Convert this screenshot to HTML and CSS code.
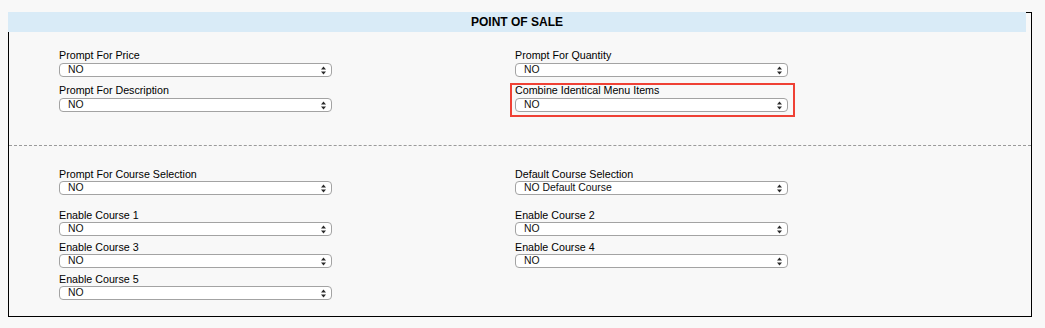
FILE: index.html
```html
<!DOCTYPE html>
<html>
<head>
<meta charset="utf-8">
<link rel="stylesheet" href="styles.css">
</head>
<body>
<div class="panel">
  <div class="panel-title">POINT OF SALE</div>

  <div class="section section-top">
    <div class="grid">
      <div class="field">
        <div class="label">Prompt For Price</div>
        <div class="select"><span class="value">NO</span><svg class="arrows" width="5" height="9" viewBox="0 0 5 9"><path d="M0 3.6 L2.5 0.4 L5 3.6 Z M0 5.4 L5 5.4 L2.5 8.6 Z"/></svg></div>
      </div>
      <div class="field">
        <div class="label">Prompt For Quantity</div>
        <div class="select"><span class="value">NO</span><svg class="arrows" width="5" height="9" viewBox="0 0 5 9"><path d="M0 3.6 L2.5 0.4 L5 3.6 Z M0 5.4 L5 5.4 L2.5 8.6 Z"/></svg></div>
      </div>
      <div class="field">
        <div class="label">Prompt For Description</div>
        <div class="select"><span class="value">NO</span><svg class="arrows" width="5" height="9" viewBox="0 0 5 9"><path d="M0 3.6 L2.5 0.4 L5 3.6 Z M0 5.4 L5 5.4 L2.5 8.6 Z"/></svg></div>
      </div>
      <div class="field field-highlight">
        <div class="label">Combine Identical Menu Items</div>
        <div class="select"><span class="value">NO</span><svg class="arrows" width="5" height="9" viewBox="0 0 5 9"><path d="M0 3.6 L2.5 0.4 L5 3.6 Z M0 5.4 L5 5.4 L2.5 8.6 Z"/></svg></div>
      </div>
    </div>
  </div>

  <div class="section section-courses">
    <div class="grid grid-course">
      <div class="field">
        <div class="label">Prompt For Course Selection</div>
        <div class="select"><span class="value">NO</span><svg class="arrows" width="5" height="9" viewBox="0 0 5 9"><path d="M0 3.6 L2.5 0.4 L5 3.6 Z M0 5.4 L5 5.4 L2.5 8.6 Z"/></svg></div>
      </div>
      <div class="field">
        <div class="label">Default Course Selection</div>
        <div class="select"><span class="value">NO Default Course</span><svg class="arrows" width="5" height="9" viewBox="0 0 5 9"><path d="M0 3.6 L2.5 0.4 L5 3.6 Z M0 5.4 L5 5.4 L2.5 8.6 Z"/></svg></div>
      </div>
    </div>
    <div class="grid grid-enable">
      <div class="field">
        <div class="label">Enable Course 1</div>
        <div class="select"><span class="value">NO</span><svg class="arrows" width="5" height="9" viewBox="0 0 5 9"><path d="M0 3.6 L2.5 0.4 L5 3.6 Z M0 5.4 L5 5.4 L2.5 8.6 Z"/></svg></div>
      </div>
      <div class="field">
        <div class="label">Enable Course 2</div>
        <div class="select"><span class="value">NO</span><svg class="arrows" width="5" height="9" viewBox="0 0 5 9"><path d="M0 3.6 L2.5 0.4 L5 3.6 Z M0 5.4 L5 5.4 L2.5 8.6 Z"/></svg></div>
      </div>
      <div class="field">
        <div class="label">Enable Course 3</div>
        <div class="select"><span class="value">NO</span><svg class="arrows" width="5" height="9" viewBox="0 0 5 9"><path d="M0 3.6 L2.5 0.4 L5 3.6 Z M0 5.4 L5 5.4 L2.5 8.6 Z"/></svg></div>
      </div>
      <div class="field">
        <div class="label">Enable Course 4</div>
        <div class="select"><span class="value">NO</span><svg class="arrows" width="5" height="9" viewBox="0 0 5 9"><path d="M0 3.6 L2.5 0.4 L5 3.6 Z M0 5.4 L5 5.4 L2.5 8.6 Z"/></svg></div>
      </div>
      <div class="field">
        <div class="label">Enable Course 5</div>
        <div class="select"><span class="value">NO</span><svg class="arrows" width="5" height="9" viewBox="0 0 5 9"><path d="M0 3.6 L2.5 0.4 L5 3.6 Z M0 5.4 L5 5.4 L2.5 8.6 Z"/></svg></div>
      </div>
    </div>
  </div>
</div>
</body>
</html>
```

FILE: styles.css
```css
html, body {
  margin: 0;
  padding: 0;
  background: #f8f8f8;
}

body {
  padding: 12px 8px 0 8px;
  font-family: "Liberation Sans", Arial, Helvetica, sans-serif;
  color: #000;
}

.panel {
  width: 1022px;
  border: 1px solid #000;
  background: #f8f8f8;
}

.panel-title {
  margin: -1px 0 0 -1px;
  width: 1018px;
  height: 20px;
  line-height: 20px;
  background: #d9ebf7;
  text-align: center;
  font-weight: bold;
  font-size: 12px;
}

.section {
  padding-left: 50px;
}

.section-top {
  padding-top: 16px;
  padding-bottom: 33px;
  border-bottom: 1px dashed #9a9a9a;
}

.section-courses {
  padding-top: 22px;
  padding-bottom: 16px;
}

.grid {
  display: grid;
  grid-template-columns: 456px 1fr;
  row-gap: 6px;
}

.grid-course {
  margin-bottom: 14px;
}

.grid-enable {
  row-gap: 5px;
}

.field {
  width: 273px;
  position: relative;
}

.label {
  font-size: 10.7px;
  line-height: 13px;
  height: 13px;
  white-space: nowrap;
}

.section-top .label {
  line-height: 14px;
  height: 14px;
  margin-bottom: 1px;
}

.select {
  box-sizing: border-box;
  height: 14px;
  border: 1px solid #a3a3a3;
  border-radius: 4px;
  background: #fff;
  display: flex;
  align-items: center;
  justify-content: space-between;
  padding: 0 5px 0 8px;
}

.value {
  font-size: 10.4px;
  line-height: 12px;
  color: #111;
  white-space: nowrap;
}

.arrows {
  display: block;
  fill: #2a2a2a;
}

.field-highlight::after {
  content: "";
  position: absolute;
  top: 0;
  left: -5px;
  right: -7px;
  bottom: -5px;
  border: 2px solid #ef4135;
  pointer-events: none;
}
```
